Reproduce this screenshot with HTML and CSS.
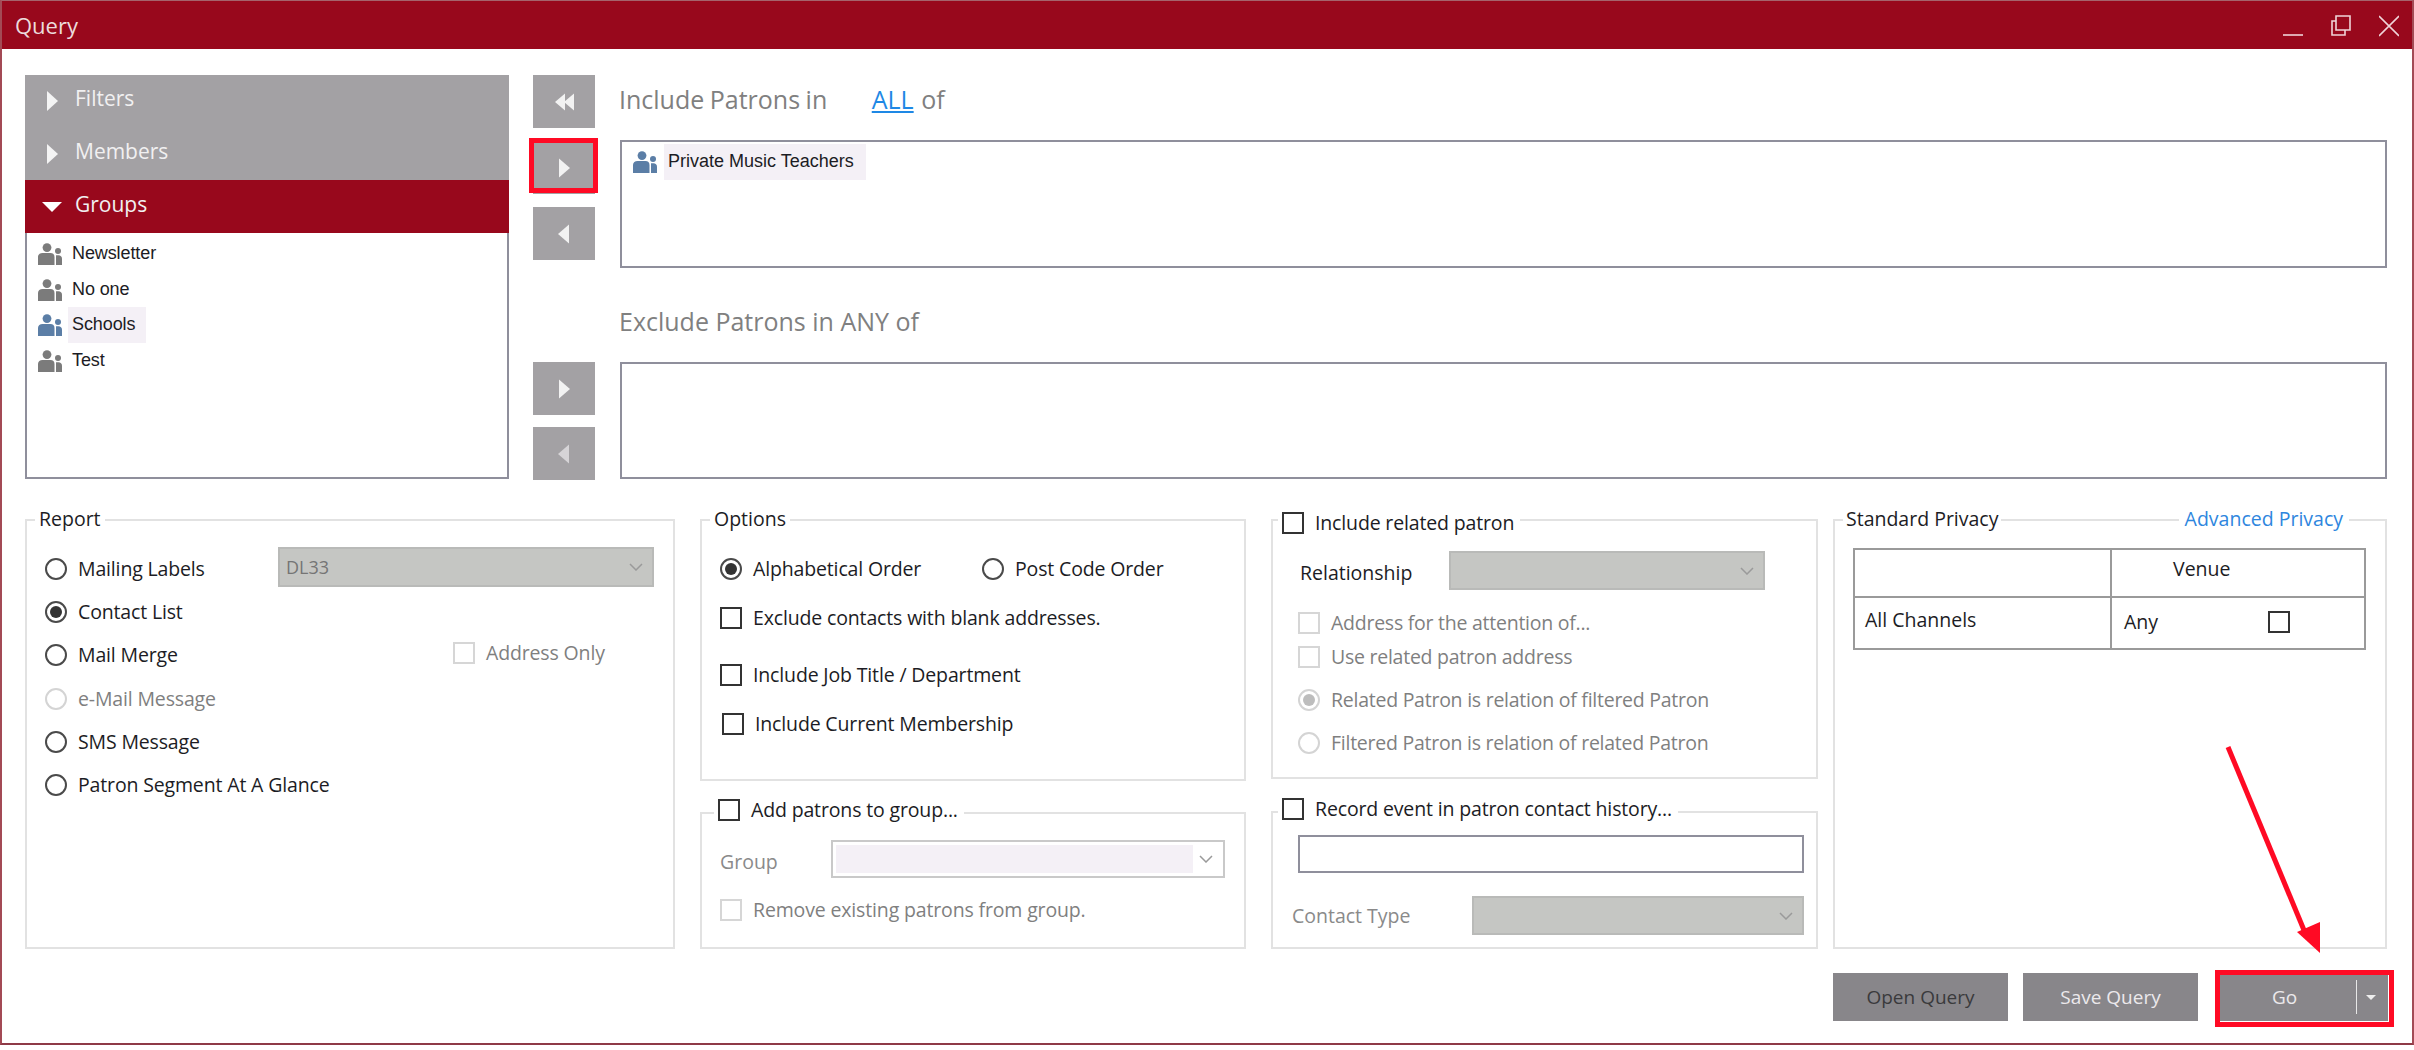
FILE: index.html
```html
<!DOCTYPE html>
<html lang="en">
<head>
<meta charset="utf-8">
<title>Query</title>
<link rel="stylesheet" href="styles.css">
</head>
<body>
<svg class="defs" width="0" height="0" aria-hidden="true">
  <symbol id="people" viewBox="0 0 24 22">
    <circle cx="9" cy="4.6" r="4.4"/>
    <circle cx="20" cy="8" r="3"/>
    <path d="M0 22V14C0 11.3 2 10 4.5 10H12.5C15 10 16.5 11.3 16.5 14V22Z"/>
    <path d="M18 12.2H20.5C22.5 12.2 24 13.5 24 15.5V22H18Z"/>
  </symbol>
</svg>
<div class="window">
  <header class="titlebar">
    <span class="title">Query</span>
    <div class="winctl">
      <svg width="20" height="22" viewBox="0 0 20 22"><path d="M0 20H20" /></svg>
      <svg width="20" height="22" viewBox="0 0 20 22"><path d="M5 1H19V15H5ZM5 6H1V20H14V15" /></svg>
      <svg width="20" height="22" viewBox="0 0 20 22"><path d="M0 1L20 21M20 1L0 21" /></svg>
    </div>
  </header>
  <main class="content">
    <section class="upper">
      <div class="accordion">
        <div class="acc-head"><i class="tri-right"></i><span>Filters</span></div>
        <div class="acc-head"><i class="tri-right"></i><span>Members</span></div>
        <div class="acc-head active"><i class="tri-down"></i><span>Groups</span></div>
        <ul class="acc-list">
          <li><svg class="people"><use href="#people"/></svg><span>Newsletter</span></li>
          <li><svg class="people"><use href="#people"/></svg><span>No one</span></li>
          <li class="sel"><svg class="people"><use href="#people"/></svg><span>Schools</span></li>
          <li><svg class="people"><use href="#people"/></svg><span>Test</span></li>
        </ul>
      </div>
      <div class="picker">
        <div class="arrows include-arrows">
          <button class="arrow-btn"><svg width="20" height="20" viewBox="0 0 20 20"><path d="M11 1.5V18.5L1 10ZM20 1.5V18.5L10 10Z"/></svg></button>
          <button class="arrow-btn"><svg width="20" height="20" viewBox="0 0 20 20"><path d="M5 0.5V19.5L16 10Z"/></svg></button>
          <button class="arrow-btn"><svg width="20" height="20" viewBox="0 0 20 20"><path d="M15 0.5V19.5L4 10Z"/></svg></button>
        </div>
        <div class="target include-target">
          <h2 class="heading">Include Patrons in <a class="all">ALL</a> of</h2>
          <div class="box box-inc">
            <div class="chip"><svg class="people blue"><use href="#people"/></svg><span>Private Music Teachers</span></div>
          </div>
        </div>
        <div class="arrows exclude-arrows">
          <button class="arrow-btn"><svg width="20" height="20" viewBox="0 0 20 20"><path d="M5 0.5V19.5L16 10Z"/></svg></button>
          <button class="arrow-btn"><svg width="20" height="20" viewBox="0 0 20 20"><path class="dim" d="M15 0.5V19.5L4 10Z"/></svg></button>
        </div>
        <div class="target exclude-target">
          <h2 class="heading">Exclude Patrons in ANY of</h2>
          <div class="box box-exc"></div>
        </div>
      </div>
    </section>

    <section class="lower">
      <fieldset class="group report">
        <legend>Report</legend>
        <div class="report-rows">
          <div class="row r1"><label class="opt"><i class="radio"></i>Mailing Labels</label><div class="select grey sel-dl"><span>DL33</span><svg class="chev" viewBox="0 0 14 8"><path d="M1 1L7 7L13 1"/></svg></div></div>
          <div class="row r2"><label class="opt"><i class="radio on"></i>Contact List</label></div>
          <div class="row r3"><label class="opt"><i class="radio"></i>Mail Merge</label><label class="opt dis addr"><i class="check"></i>Address Only</label></div>
          <div class="row r4"><label class="opt dis"><i class="radio"></i>e-Mail Message</label></div>
          <div class="row r5"><label class="opt"><i class="radio"></i>SMS Message</label></div>
          <div class="row r6"><label class="opt"><i class="radio"></i>Patron Segment At A Glance</label></div>
        </div>
      </fieldset>

      <div class="col col2">
        <fieldset class="group options">
          <legend>Options</legend>
          <div class="opts">
            <div class="row-a"><label class="opt w-alpha"><i class="radio on"></i>Alphabetical Order</label><label class="opt"><i class="radio"></i>Post Code Order</label></div>
            <label class="opt o2"><i class="check"></i>Exclude contacts with blank addresses.</label>
            <label class="opt o3"><i class="check"></i>Include Job Title / Department</label>
            <label class="opt o4"><i class="check"></i>Include Current Membership</label>
          </div>
        </fieldset>
        <fieldset class="group addgroup">
          <legend class="leg-check leg-up"><label class="opt"><i class="check"></i>Add patrons to group...</label></legend>
          <div class="line-group"><span class="muted lbl-group">Group</span><div class="select light"><div class="fill"></div><svg class="chev" viewBox="0 0 14 8"><path d="M1 1L7 7L13 1"/></svg></div></div>
          <label class="opt dis remove"><i class="check"></i>Remove existing patrons from group.</label>
        </fieldset>
      </div>

      <div class="col col3">
        <fieldset class="group related">
          <legend class="leg-check leg-down"><label class="opt"><i class="check"></i>Include related patron</label></legend>
          <div class="line-rel"><span class="lbl-rel">Relationship</span><div class="select grey sel-rel"><span></span><svg class="chev" viewBox="0 0 14 8"><path d="M1 1L7 7L13 1"/></svg></div></div>
          <label class="opt dis p1"><i class="check"></i>Address for the attention of...</label>
          <label class="opt dis p2"><i class="check"></i>Use related patron address</label>
          <label class="opt dis p3"><i class="radio on"></i>Related Patron is relation of filtered Patron</label>
          <label class="opt dis p4"><i class="radio"></i>Filtered Patron is relation of related Patron</label>
        </fieldset>
        <fieldset class="group record">
          <legend class="leg-check leg-up"><label class="opt"><i class="check"></i>Record event in patron contact history...</label></legend>
          <div class="textbox"></div>
          <div class="line-contact"><span class="muted">Contact Type</span><div class="select grey sel-contact"><span></span><svg class="chev" viewBox="0 0 14 8"><path d="M1 1L7 7L13 1"/></svg></div></div>
        </fieldset>
      </div>

      <div class="col4">
        <fieldset class="group privacy">
          <legend class="leg-priv">Standard Privacy</legend>
          <a class="adv">Advanced Privacy</a>
          <table class="ptable">
            <tr class="tr1"><td class="c1"></td><td class="c2 venue">Venue</td></tr>
            <tr class="tr2"><td class="c1 chan">All Channels</td><td class="c2"><div class="any"><span>Any</span><i class="check"></i></div></td></tr>
          </table>
        </fieldset>
      </div>
    </section>

    <footer class="actions">
      <button class="btn dark-text">Open Query</button>
      <button class="btn">Save Query</button>
      <button class="btn go"><span class="go-label">Go</span><span class="go-split"><i class="caret"></i></span></button>
    </footer>
  </main>
</div>
<div class="mark mark-add"></div>
<div class="mark mark-go"></div>
<svg class="pointer" viewBox="0 0 110 220" width="110" height="220"><path d="M6 2L84 190" class="pointer-line"/><path d="M75 187L98 177L98 208Z" class="pointer-head"/></svg>
</body>
</html>
```
FILE: styles.css
```css
* { box-sizing: border-box; }
html, body { margin: 0; padding: 0; background: #fff; }
body { width: 2414px; height: 1050px; position: relative; overflow: hidden; font-family: "Open Sans", "Noto Sans", sans-serif; font-size: 19.5px; color: #1c1c24; }
.defs { position: absolute; }
.window { height: 1045px; border: 2px solid #a34a55; border-top: 1px solid #a5636c; border-bottom: 2px solid #8e3a47; display: flex; flex-direction: column; }
.titlebar { height: 48px; background: #98081c; display: flex; align-items: center; justify-content: space-between; padding: 0 13px 0 13px; flex: none; }
.title { color: #ecdcdc; font-size: 22px; }
.winctl { display: flex; gap: 28px; margin-top: 2px; }
.winctl svg { fill: none; stroke: #f0d4d8; stroke-width: 1.6; }
.content { flex: 1; padding: 26px 25px 0 23px; display: flex; flex-direction: column; }

.upper { display: flex; height: 404px; flex: none; }
.accordion { width: 484px; height: 404px; display: flex; flex-direction: column; flex: none; }
.acc-head { height: 52.7px; background: #a3a1a4; color: #f1f0f1; font-size: 21px; display: flex; align-items: center; padding-left: 22px; flex: none; }
.acc-head span { margin-left: 17px; position: relative; top: -3px; }
.acc-head.active { background: #98081c; }
.tri-right { width: 0; height: 0; border-left: 11px solid #f4f4f4; border-top: 10px solid transparent; border-bottom: 10px solid transparent; }
.tri-down { width: 0; height: 0; border-top: 10px solid #fff; border-left: 10px solid transparent; border-right: 10px solid transparent; margin-left: -5px; margin-right: -4px; }
.acc-list { list-style: none; margin: 0; padding: 3px 0 0 11px; flex: 1; border: 2px solid #8f8f9c; border-top: 0; font-family: "Liberation Sans", Arial, sans-serif; font-size: 18px; }
.acc-list li { height: 35.7px; display: flex; align-items: center; }
.acc-list li span { padding: 0 11px 0 4px; height: 36px; line-height: 34px; margin-left: 6px; letter-spacing: -0.1px; }
.acc-list .sel span { background: #f4f0f6; }
.people { width: 24px; height: 22px; fill: #7b7b7b; flex: none; }
.sel .people, .people.blue { fill: #5b7ea6; }

.picker { flex: 1; margin-left: 24px; display: grid; grid-template-columns: 62px 1fr; grid-template-rows: 193px 1fr; column-gap: 25px; row-gap: 94px; }
.arrows { display: flex; flex-direction: column; }
.include-arrows { gap: 13px; }
.exclude-arrows { gap: 12px; }
.arrow-btn { width: 62px; height: 53px; background: #a3a1a4; border: 0; padding: 0; display: flex; align-items: center; justify-content: center; flex: none; }
.arrow-btn svg { fill: #f2f2f2; }
.arrow-btn .dim { fill: #d6d4d7; }
.target { display: flex; flex-direction: column; position: relative; }
.heading { margin: 0 0 0 -1px; font-weight: 400; font-size: 25px; color: #808080; line-height: 32px; white-space: pre; flex: none; }
.include-target .heading { height: 65px; padding-top: 8px; word-spacing: -1px; }
.all { color: #1e88e5; text-decoration: underline; margin-left: 39px; margin-right: 2px; }
.box { border: 2px solid #8f8f9c; background: #fff; flex: none; }
.box-inc { height: 128px; padding: 2px 0 0 11px; }
.exclude-target .heading { position: absolute; top: -57px; left: 0; }
.box-exc { height: 117px; }
.chip { display: flex; align-items: center; font-family: "Liberation Sans", Arial, sans-serif; font-size: 18px; height: 36px; }
.chip span { background: #f4f0f6; height: 36px; line-height: 34px; padding: 0 12px 0 4px; margin-left: 7px; }

.lower { display: flex; margin-top: 29px; height: 441px; flex: none; gap: 25px; align-items: stretch; }
.group { margin: 0; border: 2px solid #e2e2e2; padding: 0; position: relative; min-width: 0; }
legend { padding: 0 4px; margin-left: 8px; font-size: 19.5px; line-height: 24px; position: relative; top: -1px; }
.report { width: 650px; flex: none; height: 441px; }
.col { width: 546px; flex: none; display: flex; flex-direction: column; }
.col2 { gap: 20px; }
.col3 { width: 547px; gap: 21px; }
.col4 { width: 554px; flex: none; margin-left: -10px; }
.opt { display: inline-flex; align-items: center; font-size: 19.5px; line-height: 24px; white-space: nowrap; letter-spacing: -0.15px; }
.dis { color: #7f7f7f; }
.radio { width: 22px; height: 22px; border: 2px solid #4a4a4a; border-radius: 50%; display: inline-block; margin-right: 11px; flex: none; background: #fff; position: relative; }
.radio.on::after { content: ""; position: absolute; left: 3px; top: 3px; width: 12px; height: 12px; border-radius: 50%; background: #333; }
.dis .radio { border-color: #d4d4d4; }
.dis .radio.on::after { background: #bdbdbd; }
.check { width: 22px; height: 22px; border: 2px solid #333; display: inline-block; margin-right: 11px; flex: none; background: #fff; }
.dis .check { border-color: #d6d6d6; }

.report-rows { display: flex; flex-direction: column; padding-left: 18px; }
.row { height: 43.3px; display: flex; align-items: center; position: relative; flex: none; }
.r1 { margin-top: 15px; }
.select { display: flex; align-items: center; justify-content: space-between; }
.grey { background: #c5c6c3; border: 2px solid #b9bab8; color: #757575; }
.chev { width: 14px; height: 8px; fill: none; stroke: #9a9a9a; stroke-width: 1.5; flex: none; }
.sel-dl { position: absolute; left: 233px; top: 0; width: 376px; height: 40px; padding: 0 9px 0 6px; font-size: 18px; }
.addr { position: absolute; left: 408px; top: 7px; }

.options { height: 273px; flex: none; }
.opts { padding-left: 18px; position: relative; }
.row-a { padding-top: 15px; display: flex; height: 43px; align-items: center; margin-top: 8px; }
.w-alpha { width: 262px; }
.o2, .o3, .o4 { display: flex; height: 24px; }
.o2 { margin-top: 23px; }
.o3 { margin-top: 33px; }
.o4 { margin-top: 25px; margin-left: 2px; }

.addgroup { height: 148px; flex: none; }
.record { height: 149px; flex: none; }
.leg-check { margin-left: 12px; padding: 0 6px 0 4px; }
.col3 .leg-check { margin-left: 5px; }
.leg-check .opt { display: flex; }
.leg-up { top: -3px; }
.leg-down { top: 3px; }
.line-group { display: flex; align-items: center; margin: 15px 19px 0 18px; height: 38px; }
.lbl-group { width: 111px; position: relative; top: 2px; }
.muted { color: #8a8a8a; }
.light { flex: 1; height: 38px; border: 2px solid #c9c9c9; padding: 3px 10px 3px 3px; }
.fill { width: 357px; height: 28px; background: #f4f0f6; }
.remove { display: flex; margin: 20px 0 0 18px; height: 24px; }

.related { height: 271px; flex: none; }
.line-rel { display: flex; align-items: center; margin: 19px 0 0 27px; height: 39px; }
.lbl-rel { width: 149px; position: relative; top: 2px; }
.sel-rel { width: 316px; height: 39px; padding: 0 9px 0 6px; }
.p1, .p2, .p3, .p4 { display: flex; height: 24px; margin-left: 25px; letter-spacing: -0.25px; }
.p1 { margin-top: 21px; }
.p2 { margin-top: 10px; }
.p3 { margin-top: 19px; }
.p4 { margin-top: 19px; }

.textbox { height: 38px; border: 2px solid #8f8f9c; margin: 11px 12px 0 25px; }
.line-contact { display: flex; align-items: center; margin: 23px 12px 0 19px; height: 39px; }
.line-contact .muted { width: 180px; }
.sel-contact { flex: 1; height: 39px; padding: 0 9px 0 6px; }

.privacy { height: 441px; padding: 0 18px; }
.leg-priv { margin-left: -10px; padding: 0 3px; }
.adv { position: absolute; top: -25px; right: 36px; background: #fff; padding: 0 6px; line-height: 24px; color: #2e86de; }
.ptable { border-collapse: collapse; width: 513px; margin-top: 16px; table-layout: fixed; font-size: 19.5px; }
.ptable td { border: 2px solid #9a9a9a; padding: 0; }
.tr1 { height: 48px; }
.tr2 { height: 52px; }
.c1 { width: 257px; }
.ptable .venue { padding-left: 61px; padding-bottom: 10px; }
.ptable .chan { padding: 0 0 8px 10px; }
.any { display: flex; align-items: center; justify-content: space-between; padding: 0 74px 3px 12px; }
.any .check { margin-right: 0; }

.actions { display: flex; justify-content: flex-end; gap: 15px; margin-top: 24px; margin-right: -1px; align-items: flex-start; }
.btn { width: 175px; height: 48px; background: #88868a; border: 0; color: #ece9ec; font-family: inherit; font-size: 19px; padding: 0; }
.dark-text { color: #3a3a3c; }
.go { width: 169px; display: flex; align-items: center; margin-left: 6px; position: relative; }
.go-label { width: 137px; flex: none; padding-right: 6px; text-align: center; }
.go-split { width: 32px; flex: none; height: 34px; border-left: 1px solid #e8e8e8; display: flex; align-items: center; justify-content: center; padding-top: 1px; }
.caret { width: 0; height: 0; border-top: 5px solid #eee; border-left: 5px solid transparent; border-right: 5px solid transparent; margin-left: -4px; }

.mark { position: absolute; border: 5px solid #ff0a24; pointer-events: none; }
.mark-add { left: 529px; top: 138px; width: 69px; height: 55px; }
.mark-go { left: 2215px; top: 970px; width: 179px; height: 57px; }
.pointer { position: absolute; left: 2222px; top: 745px; }
.pointer-line { fill: none; stroke: #ff0a24; stroke-width: 5; }
.pointer-head { fill: #ff0a24; }
```
